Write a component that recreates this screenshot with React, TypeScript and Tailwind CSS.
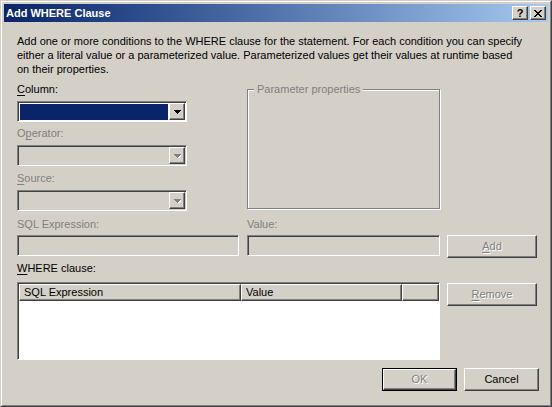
import React from "react";

const raised =
  "border border-t-white border-l-white border-r-[#404040] border-b-[#404040] shadow-[inset_-1px_-1px_0_#808080]";
const sunken =
  "border border-t-[#808080] border-l-[#808080] border-r-white border-b-white shadow-[inset_1px_1px_0_#404040]";
const embossed = "text-[#808080] [text-shadow:1px_1px_0_#ffffff]";

function Arrow({ disabled }: { disabled?: boolean }) {
  return (
    <svg width="7" height="4" viewBox="0 0 7 4" className="block" shapeRendering="crispEdges">
      {disabled && <polygon points="1,1 8,1 4.5,5" fill="#ffffff" />}
      <polygon points="0,0 7,0 3.5,4" fill={disabled ? "#808080" : "#000000"} />
    </svg>
  );
}

function Combo({ selected, disabled }: { selected?: boolean; disabled?: boolean }) {
  return (
    <div className={`w-[170px] h-[21px] flex ${sunken} ${disabled ? "bg-[#D4D0C8]" : "bg-white"}`}>
      <div className="flex-1 pl-[2px] pt-[2px] pb-[1px] pr-[1px]">
        {selected && <div className="w-full h-full bg-[#0A246A]" />}
      </div>
      <div className={`w-[16px] h-[17px] mt-[1px] mr-[1px] bg-[#D4D0C8] flex items-center justify-center ${raised}`}>
        <Arrow disabled={disabled} />
      </div>
    </div>
  );
}

function Label({ text, u, dim }: { text: string; u?: number; dim?: boolean }) {
  return (
    <div className={`h-[14px] leading-[14px] ${dim ? "text-[#808080]" : "text-black"}`}>
      {u === undefined ? (
        text
      ) : (
        <>
          {text.slice(0, u)}
          <span className="underline underline-offset-[2px]">{text[u]}</span>
          {text.slice(u + 1)}
        </>
      )}
    </div>
  );
}

function Button({ children, w, def }: { children: React.ReactNode; w: string; def?: boolean }) {
  const inner = (
    <div className={`h-full bg-[#D4D0C8] flex items-center justify-center ${raised} ${embossed}`}>{children}</div>
  );
  return def ? (
    <div className={`${w} h-[23px] border border-black`}>{inner}</div>
  ) : (
    <div className={`${w} h-[23px]`}>{inner}</div>
  );
}

export default function App() {
  return (
    <div
      className="w-[552px] h-[407px] bg-[#D4D0C8] border border-t-[#D4D0C8] border-l-[#D4D0C8] border-r-[#404040] border-b-[#404040] text-[11px] select-none"
      style={{ fontFamily: '"Liberation Sans", Arial, sans-serif' }}
    >
      <div className="h-full border border-t-white border-l-white border-r-[#808080] border-b-[#808080] p-[2px] flex flex-col">
        {/* title bar */}
        <div className="h-[18px] shrink-0 bg-gradient-to-r from-[#0A246A] to-[#A6CAF0] flex items-center pl-[2px] pr-[2px]">
          <span className="text-white font-bold text-[11px] leading-[18px] flex-1">Add WHERE Clause</span>
          <div className={`w-[16px] h-[14px] bg-[#D4D0C8] flex items-center justify-center ${raised}`}>
            <span className="font-bold text-[11px] leading-none text-black">?</span>
          </div>
          <div className={`w-[16px] h-[14px] ml-[2px] bg-[#D4D0C8] flex items-center justify-center ${raised}`}>
            <svg width="8" height="7" viewBox="0 0 8 7" shapeRendering="crispEdges">
              <path d="M0 0h2v1H0zM6 0h2v1H6zM1 1h2v1H1zM5 1h2v1H5zM2 2h4v1H2zM3 3h2v1H3zM2 4h4v1H2zM1 5h2v1H1zM5 5h2v1H5zM0 6h2v1H0zM6 6h2v1H6z" fill="#000" />
            </svg>
          </div>
        </div>

        {/* content */}
        <div className="pl-[13px] pr-[9px] flex flex-col">
          <p className="mt-[12px] leading-[14px] text-black">
            Add one or more conditions to the WHERE clause for the statement. For each condition you can specify
            <br />
            either a literal value or a parameterized value. Parameterized values get their values at runtime based
            <br />
            on their properties.
          </p>

          <div className="mt-[6px] flex gap-[60px]">
            <div className="flex flex-col w-[170px]">
              <Label text="Column:" u={0} />
              <div className="mt-[5px]">
                <Combo selected />
              </div>
              <div className="mt-[4px]">
                <Label text="Operator:" u={1} dim />
              </div>
              <div className="mt-[5px]">
                <Combo disabled />
              </div>
              <div className="mt-[5px]">
                <Label text="Source:" u={0} dim />
              </div>
              <div className="mt-[5px]">
                <Combo disabled />
              </div>
            </div>
            <div className="relative mt-[7px] w-[193px] h-[120px] border border-[#808080] shadow-[inset_1px_1px_0_#ffffff,1px_1px_0_#ffffff]">
              <span className="absolute -top-[8px] left-[6px] bg-[#D4D0C8] px-[3px] leading-[14px] text-[#808080]">
                Parameter properties
              </span>
            </div>
          </div>

          <div className="mt-[6px] flex">
            <div className="flex flex-col w-[222px]">
              <Label text="SQL Expression:" dim />
              <div className={`mt-[4px] h-[21px] bg-[#D4D0C8] ${sunken}`} />
            </div>
            <div className="ml-[8px] flex flex-col w-[193px]">
              <Label text="Value:" dim />
              <div className={`mt-[4px] h-[21px] bg-[#D4D0C8] ${sunken}`} />
            </div>
            <div className="ml-[7px] mt-[18px]">
              <Button w="w-[90px]">
                <span>
                  <span className="underline underline-offset-[2px]">A</span>dd
                </span>
              </Button>
            </div>
          </div>

          <div className="mt-[3px]">
            <Label text="WHERE clause:" u={0} />
          </div>

          <div className="mt-[7px] flex">
            <div className={`w-[423px] h-[78px] bg-white flex flex-col ${sunken} pl-[1px] pt-[1px]`}>
              <div className="flex h-[17px] text-black">
                <div className={`w-[222px] bg-[#D4D0C8] pl-[4px] leading-[15px] ${raised}`}>SQL Expression</div>
                <div className={`w-[161px] bg-[#D4D0C8] pl-[4px] leading-[15px] ${raised}`}>Value</div>
                <div className={`flex-1 bg-[#D4D0C8] ${raised}`} />
              </div>
            </div>
            <div className="ml-[7px] mt-[1px]">
              <Button w="w-[90px]">
                <span>
                  <span className="underline underline-offset-[2px]">R</span>emove
                </span>
              </Button>
            </div>
          </div>

          <div className="mt-[8px] flex justify-end gap-[7px]">
            <Button w="w-[75px]" def>
              OK
            </Button>
            <div className={`w-[75px] h-[23px] bg-[#D4D0C8] flex items-center justify-center text-black ${raised}`}>
              Cancel
            </div>
          </div>
        </div>
      </div>
    </div>
  );
}
